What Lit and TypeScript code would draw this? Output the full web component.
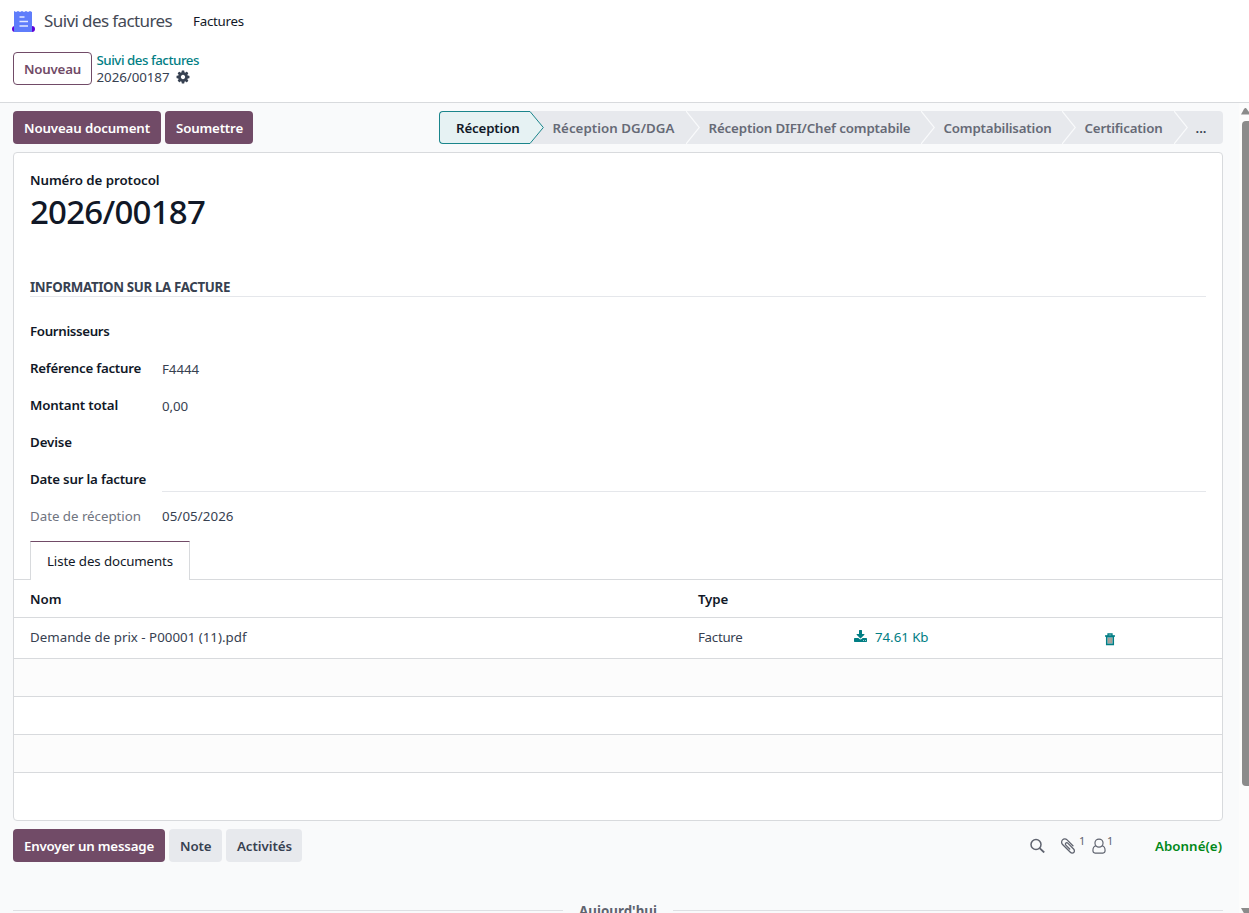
import { LitElement, html, css } from "lit";
import { customElement, property } from "lit/decorators.js";

const COG = "M1152 896q0-106-75-181t-181-75-181 75-75 181 75 181 181 75 181-75 75-181zm512-109v222q0 12-8 23t-20 13l-185 28q-19 54-39 91 35 50 107 138 10 12 10 25t-9 23q-27 37-99 108t-94 71q-12 0-26-9l-138-108q-44 23-91 38-16 136-29 186-7 28-36 28h-222q-14 0-24.5-8.5t-11.5-21.5l-28-184q-49-16-90-37l-141 107q-10 9-25 9-14 0-25-11-126-114-165-168-7-10-7-23 0-12 8-23 15-21 51-66.5t54-70.5q-27-50-41-99l-183-27q-13-2-21-12.5t-8-23.5v-222q0-12 8-23t19-13l186-28q14-46 39-92-40-57-107-138-10-12-10-24 0-10 9-23 26-36 98.5-107.5t94.5-71.5q13 0 26 10l138 107q44-23 91-38 16-136 29-186 7-28 36-28h222q14 0 24.5 8.5t11.5 21.5l28 184q49 16 90 37l142-107q9-9 24-9 13 0 25 10 129 119 165 170 7 8 7 22 0 12-8 23-15 21-51 66.5t-54 70.5q26 50 41 98l183 28q13 2 21 12.5t8 23.5z";
const DOWNLOAD = "M1344 1344q0-26-19-45t-45-19-45 19-19 45 19 45 45 19 45-19 19-45zm256 0q0-26-19-45t-45-19-45 19-19 45 19 45 45 19 45-19 19-45zm128-224v320q0 40-28 68t-68 28h-1472q-40 0-68-28t-28-68v-320q0-40 28-68t68-28h465l135 136q58 56 136 56t136-56l136-136h464q40 0 68 28t28 68zm-325-569q17 41-14 70l-448 448q-18 19-45 19t-45-19l-448-448q-31-29-14-70 17-39 59-39h256v-448q0-26 19-45t45-19h256q26 0 45 19t19 45v448h256q42 0 59 39z";
const CLIP = "M1596 1385q0 117-79 196t-196 79q-135 0-235-100l-777-776q-113-115-113-271 0-159 110-270t269-111q158 0 273 113l605 606q10 10 10 22 0 16-30.5 46.5t-46.5 30.5q-13 0-23-10l-606-607q-79-77-181-77-106 0-179 75t-73 181q0 105 76 181l776 777q63 63 145 63 64 0 106-42t42-106q0-82-63-145l-581-581q-26-24-60-24-29 0-48 19t-19 48q0 32 25 59l410 410q10 10 10 22 0 16-31 47t-47 31q-12 0-22-10l-410-410q-63-61-63-149 0-82 57-139t139-57q88 0 149 63l581 581q100 98 100 235z";

/** A run of text set to a given advance width by spreading its letter spacing. */
@customElement("fit-text")
class FitText extends LitElement {
  @property({ type: Number }) w = 0;
  static styles = css`
    :host { display: inline-block; white-space: nowrap; }
    .run { display: inline-block; white-space: pre; }
  `;
  firstUpdated() {
    const run = this.renderRoot.querySelector(".run") as HTMLElement;
    const n = (this.textContent || "").length;
    const natural = run.getBoundingClientRect().width;
    if (this.w && n) run.style.letterSpacing = `${(this.w - natural) / n}px`;
  }
  render() {
    return html`<span class="run"><slot></slot></span>`;
  }
}

@customElement("status-bar")
class StatusBar extends LitElement {
  stages = [
    { label: "Réception DG/DGA", box: 142, w: 122 },
    { label: "Réception DIFI/Chef comptabile", box: 221, w: 202 },
    { label: "Comptabilisation", box: 127, w: 108 },
    { label: "Certification", box: 98, w: 78 },
  ];
  static styles = css`
    :host { display: flex; height: 33px; color: #666a76; font-weight: 600; line-height: 34px; }
    .current { box-sizing: border-box; width: 91px; padding-left: 16px; line-height: 32px;
      color: #111827; background: #e6f2f3; border: 1px solid #1a858b; border-right: 0; border-radius: 4px 0 0 4px; }
    .stage { box-sizing: border-box; height: 33px; padding-left: 8.5px; background: #e7e9ed; }
    .more { box-sizing: border-box; height: 33px; width: 35px; padding-left: 7.5px; background: #e7e9ed; color: #374151; border-radius: 0 4px 4px 0; }
    svg { display: block; background: #e7e9ed; flex: none; }
  `;
  chevron() {
    return html`<svg width="14" height="33"><path d="M0 0L13.3 16.5L0 33" fill="none" stroke="#f9fafb" stroke-width="1.2"/></svg>`;
  }
  render() {
    return html`
      <div class="current"><fit-text w="63.5">Réception</fit-text></div>
      <svg width="14" height="33"><path d="M0 .5L13.3 16.5L0 32.5" fill="#e6f2f3" stroke="#1a858b"/></svg>
      ${this.stages.map(s => html`<div class="stage" style="width:${s.box}px"><fit-text w=${s.w}>${s.label}</fit-text></div>${this.chevron()}`)}
      <div class="more">...</div>`;
  }
}

@customElement("app-root")
class AppRoot extends LitElement {
  fields = [
    { label: "Fournisseurs", w: 79.5, value: "", vw: 0 },
    { label: "Reférence facture", w: 111, value: "F4444", vw: 37 },
    { label: "Montant total", w: 88, value: "0,00", vw: 26 },
    { label: "Devise", w: 42, value: "", vw: 0 },
    { label: "Date sur la facture", w: 116, value: "", vw: 0, line: true },
    { label: "Date de réception", w: 111, value: "05/05/2026", vw: 71.5, soft: true },
  ];
  static styles = css`
    :host { display: flex; flex-direction: column; height: 913px; overflow: hidden; background: #fff;
      font: 13.3px/20px "Noto Sans", "Open Sans", sans-serif; color: #374151; }
    svg { display: block; flex: none; }
    .nav { display: flex; align-items: center; height: 43px; padding: 0 0 2px 11.5px; box-sizing: border-box; }
    .brand { font-size: 17px; margin-left: 9.5px; color: #444955; }
    .menu { margin-left: 21px; color: #111827; }
    .panel { display: flex; box-sizing: border-box; height: 60px; padding: 9px 13px 0; gap: 4.5px; border-bottom: 1px solid #d8dadd; }
    .btn { box-sizing: border-box; height: 33px; padding: 0 10px 0 11px; border-radius: 4px; line-height: 34px; font-weight: 600; }
    .outline { border: 1px solid #714b67; color: #714b67; line-height: 33px; padding: 0 10px; }
    .primary { background: #714b67; color: #fff; }
    .gray { background: #e7e9ed; color: #374151; }
    .crumbs { line-height: 17px; }
    .crumb { display: block; color: #017e84; font-weight: 500; height: 16px; }
    .here { display: flex; align-items: center; gap: 6.5px; height: 18px; }
    .body { flex: 1; min-height: 0; display: flex; background: #f9fafb; }
    .content { width: 1210px; padding: 8px 0 0 13px; flex: none; }
    .actions { display: flex; justify-content: space-between; }
    .group { display: flex; gap: 4px; }
    .sheet { box-sizing: border-box; height: 669px; margin-top: 8px; background: #fff; border: 1px solid #d8dadd; border-radius: 4px; }
    .form { padding: 17px 16px 0; height: 371px; }
    .strong { color: #111827; font-weight: 600; }
    .number { margin-top: 2px; font-size: 33px; line-height: 40px; color: #111827; font-weight: 500; }
    .section { margin-top: 45px; height: 19px; border-bottom: 1px solid #e5e7eb; font-weight: 700; color: #374151; }
    .fields { padding-top: 16px; }
    .field { display: flex; height: 37px; line-height: 37px; }
    .label { width: 132px; flex: none; }
    .soft { color: #6f7480; }
    .value { flex: 1; padding-top: 1px; }
    .soft + .value { padding-top: 0; }
    .line { height: 29px; border-bottom: 1px solid #e5e7eb; }
    .tabs { display: flex; height: 39px; }
    .tabs::before, .tabs::after { content: ""; width: 16px; border-bottom: 1px solid #d8dadd; }
    .tabs::after { flex: 1; }
    .tab { width: 160px; box-sizing: border-box; padding-left: 16px; border: 1px solid #d8dadd; border-top-color: #714b67; border-bottom: 0; color: #111827; line-height: 38px; }
    .row { display: grid; grid-template-columns: 668px 156px 250px auto; align-items: center; box-sizing: border-box; height: 38px; padding-left: 16px; border-bottom: 1px solid #d8dadd; }
    .tall { height: 41px; padding-bottom: 2px; }
    .trash { margin-top: 3px; }
    .alt { background: #fcfcfc; }
    .file { display: flex; align-items: center; gap: 8px; color: #017e84; }
    .file svg { margin-top: -2px; }
    .chatter { display: flex; align-items: center; gap: 4px; margin-top: 8px; height: 33px; }
    .icons { display: flex; flex: 1; justify-content: flex-end; align-items: center; color: #5f636f; }
    .clip { margin: 0 1px 0 14px; }
    .count { font-size: 11px; margin-top: -10px; width: 14px; padding-left: 1px; box-sizing: border-box; }
    .follow { color: #008818; font-weight: 600; margin: 0 1px 0 35px; }
    .day { display: flex; align-items: center; gap: 16px; margin-top: 38px; font-weight: 700; color: #5f636f; line-height: 22px; height: 20px; }
    .day fit-text { padding-top: 2px; }
    .day::before, .day::after { content: ""; height: 1px; flex: 1; background: #dee0e4; }
    .scroll { width: 10px; margin-left: auto; background: #fcfcfc; display: flex; flex-direction: column; align-items: flex-end; padding-top: 4px; box-sizing: border-box; overflow: hidden; }
    .thumb { flex: none; width: 7px; height: 665px; margin: 6px 0 122px; background: #8b8b8b; border-radius: 4px 0 0 4px; }
  `;
  render() {
    return html`
      <div class="nav">
        <svg width="23" height="22" viewBox="0 0 23 22">
          <rect y="16" width="23" height="6" rx="3" fill="#5e00d8"/>
          <path d="M2 1l2 1 2-1 2 1 2-1 2 1 2-1 2 1 2-1 2 1V22H2z" fill="#5f7dfb"/>
          <path d="M7.500 7h5M7.500 11.500h8.500M7.500 16h8.500" stroke="#e4e9ff" stroke-width="1.700"/>
        </svg>
        <div class="brand"><fit-text w="128">Suivi des factures</fit-text></div>
        <div class="menu"><fit-text w="51">Factures</fit-text></div>
      </div>
      <div class="panel">
        <div class="btn outline"><fit-text w="57">Nouveau</fit-text></div>
        <div class="crumbs">
          <span class="crumb"><fit-text w="102.5">Suivi des factures</fit-text></span>
          <div class="here"><fit-text w="73">2026/00187</fit-text>
            <svg width="14" height="14" viewBox="64 64 1664 1664"><path fill="#374151" d=${COG}/></svg></div>
        </div>
      </div>
      <div class="body">
        <div class="content">
          <div class="actions">
            <div class="group">
              <div class="btn primary" style="width:148px"><fit-text w="126">Nouveau document</fit-text></div>
              <div class="btn primary"><fit-text w="67">Soumettre</fit-text></div>
            </div>
            <status-bar></status-bar>
          </div>
          <div class="sheet">
            <div class="form">
              <div class="strong"><fit-text w="129.5">Numéro de protocol</fit-text></div>
              <div class="number"><fit-text w="175">2026/00187</fit-text></div>
              <div class="section"><fit-text w="200">INFORMATION SUR LA FACTURE</fit-text></div>
              <div class="fields">
                ${this.fields.map(f => html`<div class="field">
                  <div class="label ${f.soft ? "soft" : "strong"}"><fit-text w=${f.w}>${f.label}</fit-text></div>
                  <div class="value ${f.line ? "line" : ""}">${f.value ? html`<fit-text w=${f.vw}>${f.value}</fit-text>` : ""}</div>
                </div>`)}
              </div>
            </div>
            <div class="tabs"><div class="tab"><fit-text w="126">Liste des documents</fit-text></div></div>
            <div class="row strong"><span><fit-text w="31.5">Nom</fit-text></span><span><fit-text w="30">Type</fit-text></span></div>
            <div class="row tall">
              <span><fit-text w="216.5">Demande de prix - P00001 (11).pdf</fit-text></span>
              <span><fit-text w="44.5">Facture</fit-text></span>
              <span class="file"><svg width="13" height="13" viewBox="64 0 1664 1664"><path fill="#017e84" d=${DOWNLOAD}/></svg><fit-text w="53.5">74.61 Kb</fit-text></span>
              <svg class="trash" width="12" height="14" viewBox="0 0 12 14"><path d="M1 4h10M4 3.500V2h4v1.500" fill="none" stroke="#017e84" stroke-width="1.300"/><path d="M2.600 4.500v8h6.800v-8z" fill="#8fb9c0" stroke="#017e84" stroke-width="1.300"/><path d="M4.600 6v5M6 6v5M7.400 6v5" stroke="#c08c74" stroke-width=".7"/></svg>
            </div>
            <div class="row alt"></div>
            <div class="row"></div>
            <div class="row alt"></div>
          </div>
          <div class="chatter">
            <div class="btn primary" style="width:152px"><fit-text w="130">Envoyer un message</fit-text></div>
            <div class="btn gray" style="width:53px"><fit-text w="31.5">Note</fit-text></div>
            <div class="btn gray"><fit-text w="55">Activités</fit-text></div>
            <div class="icons">
              <svg width="15" height="15" viewBox="0 0 15 15"><circle cx="6" cy="6.500" r="5" fill="none" stroke="#5f636f" stroke-width="1.500"/><path d="M9.600 10.100l4.600 4.400" stroke="#5f636f" stroke-width="1.800"/></svg>
              <svg class="clip" width="18" height="18" viewBox="0 0 1792 1792"><path fill="#5f636f" d=${CLIP}/></svg>
              <span class="count">1</span>
              <svg width="14" height="16" viewBox="0 0 13 15"><path d="M3.700 7.300C1.600 7.700.8 9.600.8 11.800c0 1.500.8 2.300 2 2.300h7.400c1.200 0 2-.8 2-2.300 0-2.200-.8-4.100-2.900-4.500" fill="none" stroke="#5f636f" stroke-width="1.100"/><circle cx="6.500" cy="4.800" r="3.800" fill="none" stroke="#5f636f" stroke-width="1.100"/></svg>
              <span class="count">1</span>
              <span class="follow"><fit-text w="67">Abonné(e)</fit-text></span>
            </div>
          </div>
          <div class="day"><fit-text w="78">Aujourd'hui</fit-text></div>
        </div>
        <div class="scroll">
          <svg width="8" height="8"><path d="M0 7.500L3 2Q4 .5 5 1L8 5v2.500z" fill="#8b8b8b"/></svg>
          <div class="thumb"></div>
          <svg width="8" height="7"><path d="M0 0h8v7H4z" fill="#8b8b8b"/></svg>
        </div>
      </div>`;
  }
}
